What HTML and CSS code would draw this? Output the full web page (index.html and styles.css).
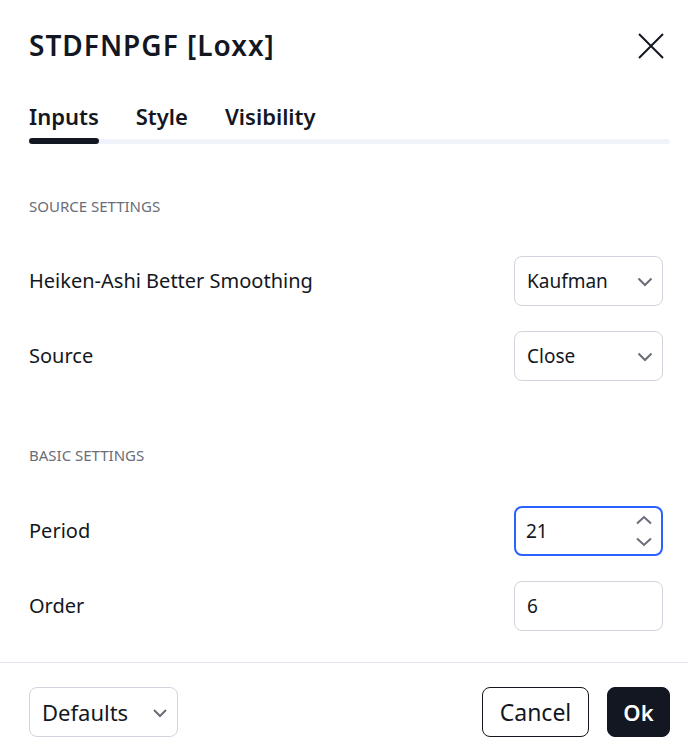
FILE: index.html
```html
<!DOCTYPE html>
<html>
<head>
<meta charset="utf-8">
<link rel="stylesheet" href="styles.css">
</head>
<body>
<div class="dialog">
  <div class="header">
    <div class="title">STDFNPGF [Loxx]</div>
    <button class="close" aria-label="Close">
      <svg width="26" height="26" viewBox="0 0 26 26"><path d="M1 1L25 25M25 1L1 25" stroke="#131722" stroke-width="2" fill="none"/></svg>
    </button>
  </div>
  <div class="tabs">
    <div class="tab active">Inputs</div>
    <div class="tab">Style</div>
    <div class="tab">Visibility</div>
  </div>
  <div class="content">
    <div class="section">SOURCE SETTINGS</div>
    <div class="row">
      <div class="label">Heiken-Ashi Better Smoothing</div>
      <div class="box select"><span>Kaufman</span><svg class="chev" width="16" height="10" viewBox="0 0 16 10"><path d="M1.5 1.5L8 8L14.5 1.5" stroke="#6a6d78" stroke-width="2" fill="none"/></svg></div>
    </div>
    <div class="row">
      <div class="label">Source</div>
      <div class="box select"><span>Close</span><svg class="chev" width="16" height="10" viewBox="0 0 16 10"><path d="M1.5 1.5L8 8L14.5 1.5" stroke="#6a6d78" stroke-width="2" fill="none"/></svg></div>
    </div>
    <div class="section second">BASIC SETTINGS</div>
    <div class="row">
      <div class="label">Period</div>
      <div class="box focused"><span>21</span>
        <div class="spin">
          <svg width="18" height="10" viewBox="0 0 18 10"><path d="M2 8.5L9 2L16 8.5" stroke="#6a6d78" stroke-width="2" fill="none"/></svg>
          <svg width="18" height="10" viewBox="0 0 18 10"><path d="M2 1.5L9 8L16 1.5" stroke="#6a6d78" stroke-width="2" fill="none"/></svg>
        </div>
      </div>
    </div>
    <div class="row">
      <div class="label">Order</div>
      <div class="box"><span>6</span></div>
    </div>
  </div>
  <div class="footer">
    <div class="box select defaults"><span>Defaults</span><svg class="chev" width="16" height="10" viewBox="0 0 16 10"><path d="M2 2L8 8L14 2" stroke="#6a6d78" stroke-width="2" fill="none"/></svg></div>
    <div class="actions">
      <button class="btn cancel">Cancel</button>
      <button class="btn ok">Ok</button>
    </div>
  </div>
</div>
</body>
</html>
```
FILE: styles.css
```css
* { box-sizing: border-box; }
html, body { margin: 0; padding: 0; background: #fff; }
body {
  font-family: "Noto Sans", "DejaVu Sans", sans-serif;
  color: #131722;
  width: 688px;
  height: 748px;
  overflow: hidden;
}
.dialog { width: 688px; height: 748px; display: flex; flex-direction: column; }
.header {
  height: 92px;
  padding: 0 24px 0 29px;
  display: flex;
  align-items: center;
  justify-content: space-between;
}
.title { font-size: 28px; font-weight: 600; letter-spacing: 1px; margin-top: -2px; }
.close { border: 0; background: none; padding: 0; width: 26px; height: 26px; display: flex; cursor: pointer; }
.tabs {
  margin: 0 18px 0 29px;
  display: flex;
  gap: 37px;
  height: 53px;
  align-items: flex-start;
  padding-top: 6px;
  position: relative;
}
.tabs::after {
  content: "";
  position: absolute;
  left: 0; right: 0; top: 47px;
  height: 5px;
  background: #f0f3fa;
  border-radius: 3px;
}
.tab { font-size: 22px; font-weight: 600; line-height: 36px; position: relative; height: 41px; }
.tab.active::after {
  content: "";
  position: absolute;
  left: 0; right: 0; top: 40px;
  height: 6px;
  background: #131722;
  border-radius: 3px;
  z-index: 1;
}
.content { padding: 0 25px 0 29px; flex: 1; }
.section {
  font-size: 15px;
  color: #6a6d78;
  margin-top: 50px;
  height: 22px;
  line-height: 22px;
  margin-bottom: 39px;
}
.section.second { margin-top: 63px; margin-bottom: 40px; }
.row {
  display: flex;
  align-items: center;
  justify-content: space-between;
  height: 50px;
  margin-bottom: 25px;
}
.label { font-size: 20px; margin-top: -2px; }
.box {
  width: 149px;
  height: 50px;
  border: 1px solid #d1d4dc;
  border-radius: 8px;
  display: flex;
  align-items: center;
  justify-content: space-between;
  padding: 0 9px 0 12px;
  font-size: 19px;
}
.box.focused { border: 2px solid #2962ff; padding-left: 10px; padding-right: 8px; }
.chev { margin-top: 1px; }
.spin { display: flex; flex-direction: column; gap: 12px; }
.footer {
  border-top: 1px solid #e0e3eb;
  height: 86px;
  padding: 24px 18px 0 29px;
  display: flex;
  align-items: flex-start;
  justify-content: space-between;
}
.defaults { width: 149px; font-size: 22px; }
.actions { display: flex; gap: 18px; }
.btn {
  font-family: inherit;
  font-size: 23px;
  height: 50px;
  border-radius: 8px;
  padding: 0;
  cursor: pointer;
}
.cancel { background: #fff; border: 1px solid #131722; color: #131722; width: 107px; }
.ok { background: #131722; border: 1px solid #131722; color: #fff; font-weight: 600; font-size: 22px; width: 63px; }
```
